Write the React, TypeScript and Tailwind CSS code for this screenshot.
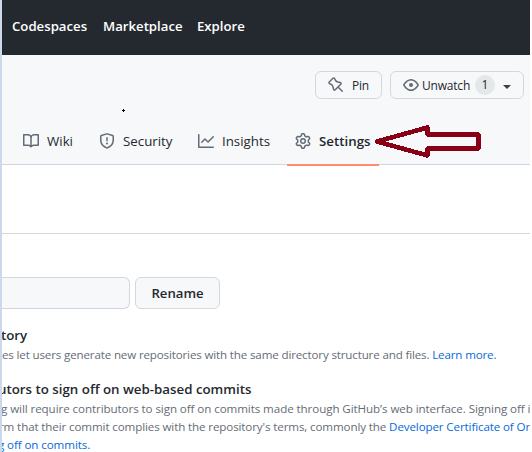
import React from "react";

const icons = {
  book: "M0 1.75A.75.75 0 01.75 1h4.253c1.227 0 2.317.59 3 1.501A3.744 3.744 0 0111.006 1h4.245a.75.75 0 01.75.75v10.5a.75.75 0 01-.75.75h-4.507a2.25 2.25 0 00-1.591.659l-.622.621a.75.75 0 01-1.06 0l-.622-.621A2.25 2.25 0 005.258 13H.75a.75.75 0 01-.75-.75V1.75zm8.755 3a2.25 2.25 0 012.25-2.25H14.5v9h-3.757c-.71 0-1.4.201-1.992.572l.004-7.322zm-1.504 7.324l.004-5.073-.002-2.253A2.25 2.25 0 005.003 2.5H1.5v9h3.757a3.75 3.75 0 011.994.574z",
  shield: "M7.467.133a1.75 1.75 0 011.066 0l5.25 1.68A1.75 1.75 0 0115 3.48V7c0 1.566-.32 3.182-1.303 4.682-.983 1.498-2.585 2.813-5.032 3.855a1.7 1.7 0 01-1.33 0c-2.447-1.042-4.049-2.357-5.032-3.855C1.32 10.182 1 8.566 1 7V3.48a1.75 1.75 0 011.217-1.667l5.25-1.68zm.61 1.429a.25.25 0 00-.153 0l-5.25 1.68a.25.25 0 00-.174.238V7c0 1.358.275 2.666 1.057 3.86.784 1.194 2.121 2.34 4.366 3.297a.2.2 0 00.154 0c2.245-.956 3.582-2.104 4.366-3.298C13.225 9.666 13.5 8.36 13.5 7V3.48a.25.25 0 00-.174-.237l-5.25-1.68zM9 10.5a1 1 0 11-2 0 1 1 0 012 0zm-.25-5.75a.75.75 0 10-1.5 0v3a.75.75 0 001.5 0v-3z",
  graph: "M1.5 1.75a.75.75 0 00-1.5 0v12.5c0 .414.336.75.75.75h14.5a.75.75 0 000-1.5H1.5V1.75zm14.28 2.53a.75.75 0 00-1.06-1.06L10 7.94 7.53 5.47a.75.75 0 00-1.06 0L3.22 8.72a.75.75 0 001.06 1.06L7 7.06l2.47 2.47a.75.75 0 001.06 0l5.25-5.25z",
  gear: "M7.429 1.525a6.593 6.593 0 011.142 0c.036.003.108.036.137.146l.289 1.105c.147.56.55.967.997 1.189.174.086.341.183.501.29.417.278.97.423 1.53.27l1.102-.303c.11-.03.175.016.195.046.219.31.41.641.573.989.014.031.022.11-.059.19l-.815.806c-.411.406-.562.957-.53 1.456a4.588 4.588 0 010 .582c-.032.499.119 1.05.53 1.456l.815.806c.08.08.073.159.059.19a6.494 6.494 0 01-.573.99c-.02.029-.086.074-.195.045l-1.103-.303c-.559-.153-1.112-.008-1.529.27-.16.107-.327.204-.5.29-.449.222-.851.628-.998 1.189l-.289 1.105c-.029.11-.101.143-.137.146a6.613 6.613 0 01-1.142 0c-.036-.003-.108-.037-.137-.146l-.289-1.105c-.147-.56-.55-.967-.997-1.189a4.502 4.502 0 01-.501-.29c-.417-.278-.97-.423-1.53-.27l-1.102.303c-.11.03-.175-.016-.195-.046a6.492 6.492 0 01-.573-.989c-.014-.031-.022-.11.059-.19l.815-.806c.411-.406.562-.957.53-1.456a4.587 4.587 0 010-.582c.032-.499-.119-1.05-.53-1.456l-.815-.806c-.08-.08-.073-.159-.059-.19a6.44 6.44 0 01.573-.99c.02-.029.086-.075.195-.045l1.103.303c.559.153 1.112.008 1.529-.27.16-.107.327-.204.5-.29.449-.222.851-.628.998-1.189l.289-1.105c.029-.11.101-.143.137-.146zM8 0c-.236 0-.47.01-.701.03-.743.065-1.29.615-1.458 1.261l-.29 1.106c-.017.066-.078.158-.211.224a5.994 5.994 0 00-.668.386c-.123.082-.233.09-.3.071L3.27 2.776c-.644-.177-1.392.02-1.82.63a7.977 7.977 0 00-.704 1.217c-.315.675-.111 1.422.363 1.891l.815.806c.05.048.098.147.088.294a6.084 6.084 0 000 .772c.01.147-.038.246-.088.294l-.815.806c-.474.469-.678 1.216-.363 1.891.2.428.436.835.704 1.218.428.609 1.176.806 1.82.63l1.103-.303c.066-.019.176-.011.299.071.213.143.436.272.668.386.133.066.194.158.212.224l.289 1.106c.169.646.715 1.196 1.458 1.26a8.094 8.094 0 001.402 0c.743-.064 1.29-.614 1.458-1.26l.29-1.106c.017-.066.078-.158.211-.224a5.98 5.98 0 00.668-.386c.123-.082.233-.09.3-.071l1.102.302c.644.177 1.392-.02 1.82-.63.268-.382.505-.789.704-1.217.315-.675.111-1.422-.364-1.891l-.814-.806c-.05-.048-.098-.147-.088-.294a6.1 6.1 0 000-.772c-.01-.147.039-.246.088-.294l.814-.806c.475-.469.679-1.216.364-1.891a7.992 7.992 0 00-.704-1.218c-.428-.609-1.176-.806-1.82-.63l-1.103.303c-.066.019-.176.011-.299-.071a5.991 5.991 0 00-.668-.386c-.133-.066-.194-.158-.212-.224L10.16 1.29C9.99.645 9.444.095 8.701.031A8.094 8.094 0 008 0zm1.5 8a1.5 1.5 0 11-3 0 1.5 1.5 0 013 0zM11 8a3 3 0 11-6 0 3 3 0 016 0z",
  eye: "M1.679 7.932c.412-.621 1.242-1.75 2.366-2.717C5.175 4.242 6.527 3.5 8 3.5c1.473 0 2.824.742 3.955 1.715 1.124.967 1.954 2.096 2.366 2.717a.119.119 0 010 .136c-.412.621-1.242 1.75-2.366 2.717C10.825 11.758 9.473 12.5 8 12.5c-1.473 0-2.824-.742-3.955-1.715C2.92 9.818 2.09 8.69 1.679 8.068a.119.119 0 010-.136zM8 2c-1.981 0-3.67.992-4.933 2.078C1.797 5.169.88 6.423.43 7.1a1.619 1.619 0 000 1.798c.45.678 1.367 1.932 2.637 3.024C4.329 13.008 6.019 14 8 14c1.981 0 3.67-.992 4.933-2.078 1.27-1.091 2.187-2.345 2.637-3.023a1.619 1.619 0 000-1.798c-.45-.678-1.367-1.932-2.637-3.023C11.671 2.992 9.981 2 8 2zm0 8a2 2 0 100-4 2 2 0 000 4z",
  pin: "M4.456.734a1.75 1.75 0 012.826.504l.613 1.327a3.081 3.081 0 002.084 1.707l2.454.584c1.332.317 1.8 1.972.832 2.94L11.06 10l3.72 3.72a.75.75 0 11-1.061 1.06L10 11.06l-2.204 2.205c-.968.968-2.623.5-2.94-.832l-.584-2.454a3.081 3.081 0 00-1.707-2.084l-1.327-.613a1.75 1.75 0 01-.504-2.826L4.456.734zM5.92 1.866a.25.25 0 00-.404-.072L1.794 5.516a.25.25 0 00.072.404l1.328.613A4.582 4.582 0 015.73 9.63l.584 2.454a.25.25 0 00.42.12l5.47-5.47a.25.25 0 00-.12-.42L9.63 5.73a4.581 4.581 0 01-3.098-2.537L5.92 1.866z",
};

function Icon({ name }: { name: keyof typeof icons }) {
  return (
    <svg width="16" height="16" viewBox="0 0 16 16" className="shrink-0 text-[#636c76]" fill="currentColor" fillRule="evenodd">
      <path d={icons[name]} />
    </svg>
  );
}

function Header() {
  return (
    <header className="flex h-[55px] items-center bg-[#24292f] pb-[2px] pl-[10px] text-[13.2px] font-semibold text-white">
      <a className="w-[91px]">Codespaces</a>
      <a className="w-[94px]">Marketplace</a>
      <a>Explore</a>
    </header>
  );
}

function RepoActions() {
  return (
    <div className="flex h-[44px] items-end gap-2 pl-[313px] text-[12px] font-medium">
      <button className="flex h-[28px] w-[67px] items-center rounded-md border border-[#d5d8da] pl-[12px]">
        <Icon name="pin" />
        <span className="ml-2 pt-[2px] tracking-[-0.2px]">Pin</span>
      </button>
      <button className="flex h-[28px] w-[134px] items-center rounded-md border border-[#d5d8da] pl-[12px]">
        <Icon name="eye" />
        <span className="ml-[3px] w-[48px] pt-[2px] tracking-[-0.2px]">Unwatch</span>
        <span className="ml-[5px] flex size-5 items-center justify-center rounded-full bg-[#e4e8e9]">1</span>
        <span className="mt-[3px] ml-[8px] border-x-4 border-t-4 border-x-transparent border-t-[#3a4046]" />
      </button>
    </div>
  );
}

function Tabs() {
  return (
    <nav className="mt-[18px] flex h-[48px] text-[13.3px]">
      <a className="flex w-[77px] items-center gap-2 pl-[21px]"><Icon name="book" /><span className="pt-[2px]">Wiki</span></a>
      <a className="flex w-[98px] items-center gap-2 pl-[20px]"><Icon name="shield" /><span className="pt-[2px]">Security</span></a>
      <a className="flex w-[110px] items-center gap-2 pl-[21px]"><Icon name="graph" /><span className="pt-[2px]">Insights</span></a>
      <a className="relative flex w-[92px] items-center gap-2 pl-[8px] font-semibold">
        <Icon name="gear" /><span className="pt-[2px]">Settings</span>
        <span className="absolute bottom-[-1px] left-0 h-[2px] w-full bg-[#fd8c73]" />
      </a>
    </nav>
  );
}

function RepoHeader() {
  return (
    <section className="relative h-[110px] border-b border-[#d0d7de] bg-[#f6f8fa]">
      <RepoActions />
      <Tabs />
      {/* Stray mark left on the page */}
      <svg className="absolute left-[120px] top-[54px]" width="3" height="3" viewBox="0 0 3 3">
        <path d="M1 0h1v1h1v1H2v1H1V2H0V1h1z" fill="#000" />
      </svg>
      {/* Hand-placed pointer towards the Settings tab */}
      <svg className="absolute left-[370px] top-[66px]" width="112" height="40" viewBox="0 0 112 40" fill="none" stroke="#880015" strokeWidth="4.6" strokeLinejoin="round" shapeRendering="crispEdges">
        <path d="M5 20.5L55.5 6.5V13.5H106.5V27.5H55.5V34.5Z" />
      </svg>
    </section>
  );
}

function Settings() {
  return (
    <main className="whitespace-nowrap">
      <div className="h-[69px] border-b border-[#d5d9dc]" />
      <div className="mt-[43px] flex gap-[5px]">
        <div className="h-[32px] w-[128px] rounded-r-md border border-l-0 border-[#d0d7de] bg-[#f6f8fa]" />
        <button className="h-[32px] w-[85px] rounded-md border border-[#d5d8da] bg-[#f6f8fa] pt-px text-[13.2px] font-semibold">Rename</button>
      </div>
      <h2 className="mt-[16px] -ml-px h-[21px] text-[13.3px] leading-[20px] font-semibold">tory</h2>
      <p className="h-[33px] text-[11.6px] leading-[18px] tracking-[-0.155px] text-[#656d76]">
        es let users generate new repositories with the same directory structure and files. <a className="text-[#0969da]">Learn more.</a>
      </p>
      <h2 className="-ml-[4px] h-[21px] text-[13.3px] leading-[20px] font-semibold">utors to sign off on web-based commits</h2>
      <div className="text-[11.6px] leading-[18px] text-[#656d76]">
        <p className="-ml-[1px] tracking-[-0.08px]">g will require contributors to sign off on commits made through GitHub’s web interface. Signing off i</p>
        <p className="-ml-[3px] tracking-[-0.12px]">rm that their commit complies with the repository's terms, commonly the <a className="text-[#0969da]">Developer Certificate of Ori</a></p>
        <p className="-ml-[4px] tracking-[-0.1px] text-[#0969da]">g off on commits.</p>
      </div>
    </main>
  );
}

export default function App() {
  return (
    <div className="flex h-[452px] w-[532px] overflow-hidden bg-white font-['Open_Sans','Noto_Sans',sans-serif] text-[#24292f]">
      <div className="z-10 w-[2px] shrink-0 bg-[#cdd8ea]" />
      <div className="w-[528px] shrink-0 overflow-hidden">
        <Header />
        <RepoHeader />
        <Settings />
      </div>
    </div>
  );
}
